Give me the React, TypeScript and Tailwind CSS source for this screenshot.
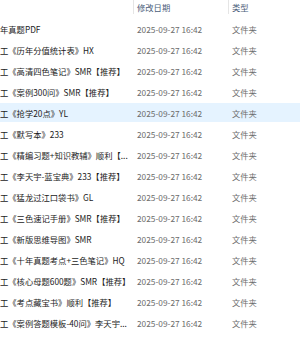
const rows = [
  "年真题PDF",
  "工《历年分值统计表》HX",
  "工《高清四色笔记》SMR【推荐】",
  "工《案例300问》SMR【推荐】",
  "工《抢学20点》YL",
  "工《默写本》233",
  "工《精编习题+知识教辅》顺利【...",
  "工《李天宇-蓝宝典》233【推荐】",
  "工《猛龙过江口袋书》GL",
  "工《三色速记手册》SMR【推荐】",
  "工《新版思维导图》SMR",
  "工《十年真题考点+三色笔记》HQ",
  "工《核心母题600题》SMR【推荐】",
  "工《考点藏宝书》顺利【推荐】",
  "工《案例答题模板-40问》李天宇...",
]

const HIGHLIGHT = 4

export default function App() {
  return (
    <div
      className="h-[350px] w-[300px] overflow-hidden bg-white text-[8.3px] leading-[12px]"
      style={{ fontFamily: '"Noto Sans CJK SC", "Noto Sans", sans-serif' }}
    >
      <div className="flex h-[18px] items-start text-[#4c607a]">
        <div className="w-[133px]" />
        <div className="flex h-[14px] w-[95px] items-center border-l border-[#e5e5e5] pl-[3px]">修改日期</div>
        <div className="flex h-[14px] flex-1 items-center border-l border-[#e5e5e5] pl-[3px]">类型</div>
      </div>

      {rows.map((name, i) => (
        <div key={i} className="h-[21px] py-px">
          <div className={"flex h-full items-center " + (i === HIGHLIGHT ? "bg-[#e5f3ff]" : "")}>
            <div className="w-[133px] whitespace-nowrap text-[#1b1b1b]">{name}</div>
            <div className="w-[95px] whitespace-nowrap pl-[4px] text-[#6d6d6d]">2025-09-27 16:42</div>
            <div className="flex-1 pl-[4px] text-[#6d6d6d]">文件夹</div>
          </div>
        </div>
      ))}
    </div>
  )
}
